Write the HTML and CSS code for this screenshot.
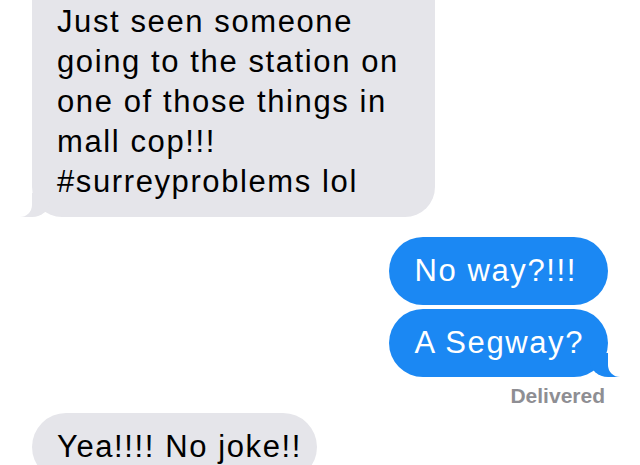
FILE: index.html
```html
<!DOCTYPE html>
<html lang="en">
<head>
    <meta charset="UTF-8">
    <title>Messages</title>
    <meta name="viewport" content="width=device-width, initial-scale=1.0">
    <link rel="stylesheet" href="styles.css">
</head>
<body>
<main class="thread">
    <!-- Incoming message -->
    <div class="bubble received first tail">
        Just seen someone<br>
        going to the station on<br>
        one of those things in<br>
        mall cop!!!<br>
        #surreyproblems lol
    </div>

    <!-- Outgoing group -->
    <div class="sent-group">
        <div class="bubble sent">No way?!!!</div>
        <div class="bubble sent tail">A Segway?</div>
    </div>
    <div class="status">Delivered</div>

    <div class="bubble received last">Yea!!!! No joke!!</div>
</main>
</body>
</html>
```

FILE: styles.css
```css
/* Page */
body {
    margin: 0;
    background: #ffffff;
    font-family: "Liberation Sans", Arial, sans-serif;
    overflow: hidden;
}

.thread {
    display: flex;
    flex-direction: column;
    padding: 0 32px;
}

/* Base bubble */
.bubble {
    position: relative;
    font-size: 31px;
    line-height: 40px;
    letter-spacing: 1.6px;
    padding: 14px 24px 14px 25px;
    border-radius: 34px;
}

.bubble.received {
    align-self: flex-start;
    background: #e5e5ea;
    color: #000000;
    padding-left: 25px;
    padding-right: 36px;
}

.bubble.received.first {
    margin-top: -30px;
    padding-top: 32px;
    padding-bottom: 15px;
    border-radius: 30px;
}

.bubble.received.last {
    margin-top: 5px;
    padding-right: 15px;
}

/* Outgoing messages */
.sent-group {
    align-self: flex-end;
    display: flex;
    flex-direction: column;
    gap: 4px;
    margin-top: 20px;
}

.bubble.sent {
    background: #1b88f3;
    color: #ffffff;
}

/* Tails */
.bubble.tail::before,
.bubble.tail::after {
    content: "";
    position: absolute;
    bottom: 0;
    height: 24px;
}

.bubble.sent.tail::before {
    right: -12px;
    width: 30px;
    background: #1b88f3;
    border-bottom-left-radius: 18px 16px;
}

.bubble.sent.tail::after {
    right: -22px;
    width: 22px;
    background: #ffffff;
    border-bottom-left-radius: 12px;
}

.bubble.received.tail::before {
    left: -12px;
    width: 30px;
    background: #e5e5ea;
    border-bottom-right-radius: 18px 16px;
}

.bubble.received.tail::after {
    left: -22px;
    width: 22px;
    background: #ffffff;
    border-bottom-right-radius: 12px;
}

/* Delivery receipt */
.status {
    align-self: flex-end;
    margin-top: 7px;
    margin-right: 3px;
    font-size: 21px;
    line-height: 24px;
    font-weight: bold;
    color: #8e8e93;
}
```
